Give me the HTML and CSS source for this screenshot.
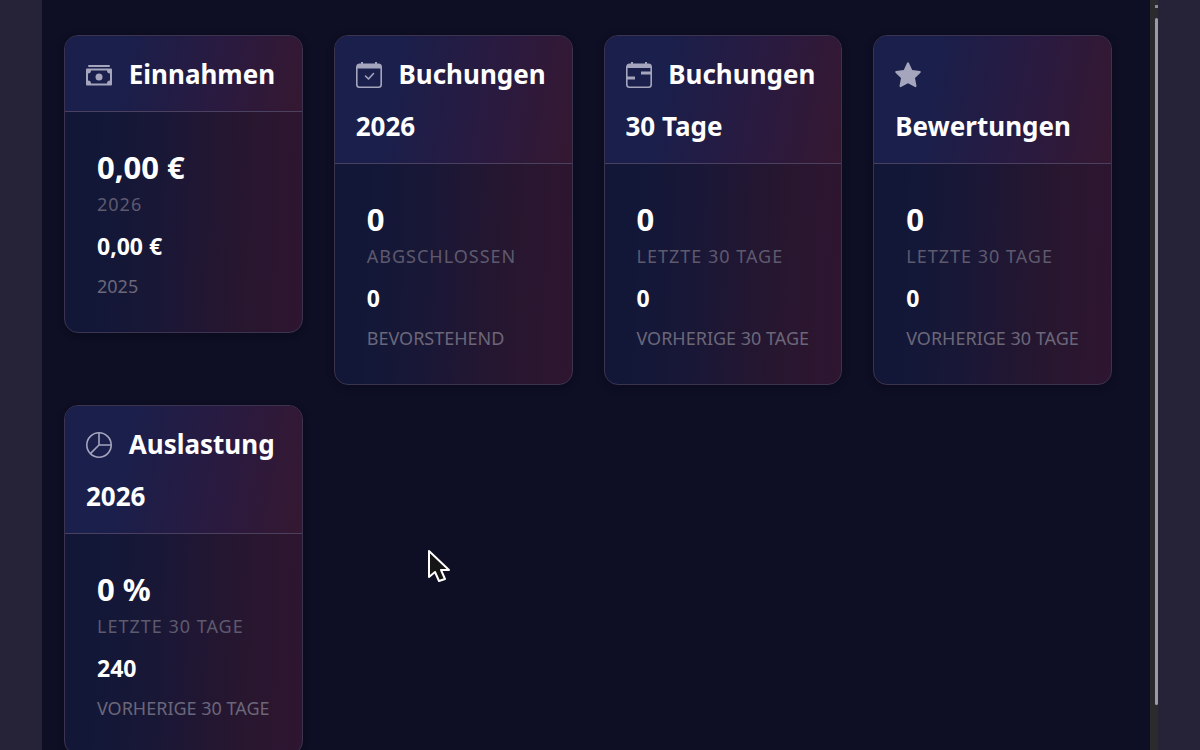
FILE: index.html
```html
<!DOCTYPE html>
<html lang="de">
<head>
    <meta charset="UTF-8">
    <meta name="viewport" content="width=device-width, initial-scale=1.0">
    <title>Dashboard</title>
    <link rel="stylesheet" href="styles.css">
</head>
<body>

<div class="page">
    <main class="dashboard">
        <section class="card">
            <h2 class="card-title">
                <svg class="icon" viewBox="0 0 26 26" fill="currentColor">
                    <rect x="2" y="3" width="22" height="2" rx="1"/>
                    <path fill-rule="evenodd" d="M1 6.500h24q1 0 1 1v15q0 1-1 1H1q-1 0-1-1v-15q0-1 1-1zM5 8.500a3 3 0 0 1-3 3v7a3 3 0 0 1 3 3h16a3 3 0 0 1 3-3v-7a3 3 0 0 1-3-3z"/>
                    <circle cx="13" cy="15" r="3.500"/>
                </svg>
                Einnahmen
            </h2>
            <div class="card-body">
                <div class="value">0,00 €</div>
                <div class="label">2026</div>
                <div class="value-small">0,00 €</div>
                <div class="label-small">2025</div>
            </div>
        </section>

        <section class="card">
            <h2 class="card-title">
                <svg class="icon" viewBox="0 0 26 26">
                    <path d="M3.500 2.300h19a2.700 2.700 0 0 1 2.700 2.700v17.500a2.700 2.700 0 0 1-2.700 2.700h-19a2.700 2.700 0 0 1-2.700-2.700V5a2.700 2.700 0 0 1 2.700-2.700z" fill="none" stroke="currentColor" stroke-width="1.600"/>
                    <path d="M1 6.500V4q0-2 2-2h2V0h2v2h12V0h2v2h2q2 0 2 2v2.500z" fill="currentColor"/>
                    <path d="M9.500 14l3 3 5-5.500" fill="none" stroke="currentColor" stroke-width="1.600" stroke-linecap="round" stroke-linejoin="round"/>
                </svg>
                Buchungen 2026
            </h2>
            <div class="card-body">
                <div class="value">0</div>
                <div class="label">ABGSCHLOSSEN</div>
                <div class="value-small">0</div>
                <div class="label-small">BEVORSTEHEND</div>
            </div>
        </section>

        <section class="card">
            <h2 class="card-title">
                <svg class="icon" viewBox="0 0 26 26">
                    <path d="M3.500 2.300h19a2.700 2.700 0 0 1 2.700 2.700v17.500a2.700 2.700 0 0 1-2.700 2.700h-19a2.700 2.700 0 0 1-2.700-2.700V5a2.700 2.700 0 0 1 2.700-2.700z" fill="none" stroke="currentColor" stroke-width="1.600"/>
                    <path d="M1 6V4q0-2 2-2h2V0h2v2h12V0h2v2h2q2 0 2 2v2z" fill="currentColor"/>
                    <path d="M25 9.500H15v3h10zM1 14.500h8v3H1z" fill="currentColor"/>
                </svg>
                Buchungen 30 Tage
            </h2>
            <div class="card-body">
                <div class="value">0</div>
                <div class="label">LETZTE 30 TAGE</div>
                <div class="value-small">0</div>
                <div class="label-small">VORHERIGE 30 TAGE</div>
            </div>
        </section>

        <section class="card">
            <h2 class="card-title">
                <svg class="icon" viewBox="0 0 26 26" fill="currentColor">
                    <path d="M12 1q1-1.500 2 0l3.200 7 7.800 1q1.500.5.5 1.800L20 16l1.500 8q0 1.500-1.500 1L13 21.300 6 25q-1.500.5-1.500-1L6 16 .5 10.800Q-.5 9.500 1 9l7.800-1z"/>
                </svg>
                Bewertungen
            </h2>
            <div class="card-body">
                <div class="value">0</div>
                <div class="label">LETZTE 30 TAGE</div>
                <div class="value-small">0</div>
                <div class="label-small">VORHERIGE 30 TAGE</div>
            </div>
        </section>

        <section class="card">
            <h2 class="card-title">
                <svg class="icon" viewBox="0 0 26 26" fill="none" stroke="currentColor" stroke-width="1.600">
                    <circle cx="13" cy="13" r="12.200"/>
                    <path d="M13 1v12h12M13 13l-8.600 8.600"/>
                </svg>
                Auslastung 2026
            </h2>
            <div class="card-body">
                <div class="value">0 %</div>
                <div class="label">LETZTE 30 TAGE</div>
                <div class="value-small">240</div>
                <div class="label-small">VORHERIGE 30 TAGE</div>
            </div>
        </section>
    </main>
    <div class="scrollbar">
        <div class="scroll-arrow"></div>
        <div class="scroll-thumb"></div>
    </div>
</div>

<svg class="cursor" viewBox="0 0 24 34">
    <path d="M2 2v26l6-5 4 9 6-2-4-9h8z" fill="#151515" stroke="#fff" stroke-width="2" stroke-linejoin="round"/>
</svg>

</body>
</html>
```
FILE: styles.css
```css
* {
    box-sizing: border-box;
}
body {
    margin: 0;
    font-family: "Noto Sans", sans-serif;
    background-color: #262238;
    color: #fff;
    overflow: hidden;
}
.page {
    display: flex;
    height: 100vh;
    margin: 0 42px;
}
.dashboard {
    flex: 1;
    display: grid;
    grid-template-columns: repeat(4, 1fr);
    grid-auto-rows: max-content;
    gap: 20px 31px;
    align-items: start;
    padding: 35px 38px 20px 22px;
    background-color: #0e0e24;
    overflow: hidden;
}
.card {
    border: 1px solid #3b3350;
    border-radius: 14px;
    background: linear-gradient(92deg, #121738 15%, #1a1736 42%, #28162f 75%, #2e1530);
    box-shadow: 0 2px 8px rgba(0, 0, 0, 0.2);
    overflow: hidden;
}
.card-title {
    margin: 0;
    padding: 12px 20px 11px 21px;
    font-size: 26px;
    font-weight: 700;
    line-height: 52px;
    border-bottom: 1px solid #4a4160;
    background: linear-gradient(100deg, #1a1f4b 25%, #2a1a40 65%, #351831);
}
.icon {
    width: 26px;
    height: 26px;
    margin-right: 10px;
    vertical-align: -4px;
    color: #a5a5bd;
    overflow: visible;
}
.card-body {
    padding: 35px 32px 31px;
}
.value {
    font-size: 31px;
    font-weight: 700;
    line-height: 40px;
}
.label {
    font-size: 18px;
    line-height: 34px;
    letter-spacing: 1px;
    color: #5e5a6e;
}
.value-small {
    font-size: 23px;
    font-weight: 700;
    line-height: 50px;
}
.label-small {
    font-size: 18px;
    line-height: 30px;
    color: #6b6779;
    white-space: nowrap;
}
.scrollbar {
    width: 8px;
    padding-left: 5px;
    background-color: #2b2b2d;
}
.scroll-arrow {
    width: 3px;
    height: 3px;
    margin: 5px 0 10px;
    background-color: #8d8c96;
}
.scroll-thumb {
    width: 3px;
    height: calc(100% - 63px);
    border-radius: 2px;
    background-color: #9c9aa6;
}
.cursor {
    position: absolute;
    left: 427px;
    top: 549px;
    width: 24px;
    height: 34px;
}
```
